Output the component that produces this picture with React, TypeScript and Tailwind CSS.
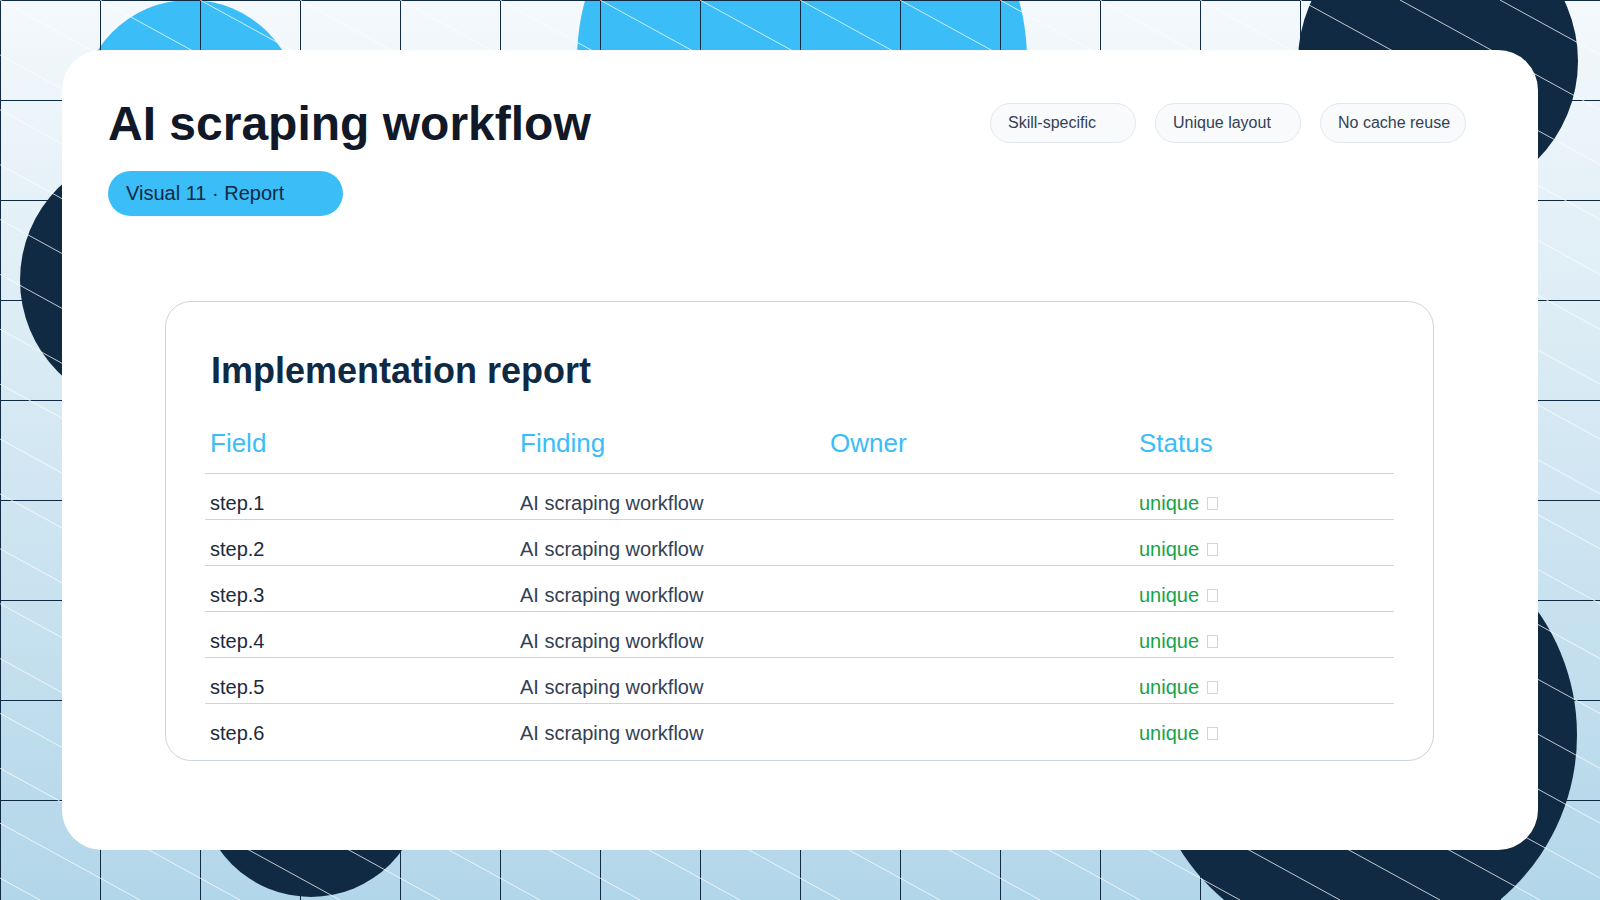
const pills = ["Skill-specific", "Unique layout", "No cache reuse"];
const rows = [1, 2, 3, 4, 5, 6];

function Backdrop() {
  const diag = Array.from({ length: 34 }, (_, i) => i * 100 - 1700);
  return (
    <div className="absolute inset-0">
      <div className="absolute left-[80px] top-[0px] h-[220px] w-[220px] rounded-full bg-[#3bbdf8]" />
      <div className="absolute left-[577px] top-[-165px] h-[450px] w-[450px] rounded-full bg-[#3bbdf8]" />
      <div className="absolute left-[20px] top-[150px] h-[260px] w-[260px] rounded-full bg-[#102a43]" />
      <div className="absolute left-[1298px] top-[-79px] h-[280px] w-[280px] rounded-full bg-[#102a43]" />
      <div className="absolute left-[1147px] top-[520px] h-[430px] w-[430px] rounded-full bg-[#102a43]" />
      <div className="absolute left-[199px] top-[673px] h-[224px] w-[224px] rounded-full bg-[#102a43]" />
      <svg className="absolute inset-0" width="1600" height="900">
        {Array.from({ length: 16 }, (_, i) => (
          <line key={"v" + i} x1={i * 100 + 0.5} y1={0} x2={i * 100 + 0.5} y2={900} stroke="#102a43" strokeWidth="1" />
        ))}
        {Array.from({ length: 9 }, (_, i) => (
          <line key={"h" + i} x1={0} y1={i * 100 + 0.5} x2={1600} y2={i * 100 + 0.5} stroke="#102a43" strokeWidth="1" />
        ))}
        {diag.map((x) => (
          <line key={"d" + x} x1={x} y1={0} x2={x + 1640} y2={900} stroke="#ffffff" strokeWidth="1" opacity="0.75" />
        ))}
      </svg>
    </div>
  );
}

export default function App() {
  return (
    <div
      className="relative h-[900px] w-[1600px] overflow-hidden bg-gradient-to-b from-[#f4f9fc] to-[#b2d6e9]"
      style={{ fontFamily: '"Liberation Sans", Arial, sans-serif' }}
    >
      <Backdrop />
      <div className="relative px-[62px] pt-[50px]">
        <div className="h-[800px] rounded-[40px] bg-white pl-[46px] pr-[72px] pt-[45px]">
          <div className="flex items-start justify-between">
            <div>
              <h1 className="text-[48px] font-bold leading-[1.2] text-[#111827]">AI scraping workflow</h1>
              <div className="mt-[18px] flex h-[45px] w-[235px] items-center rounded-full bg-[#3bbdf8] pl-[18px] text-[20px] text-[#0f2a44]">
                Visual 11 · Report
              </div>
            </div>
            <div className="mt-[8px] flex gap-[19px]">
              {pills.map((p) => (
                <div
                  key={p}
                  className="flex h-[40px] w-[146px] items-center rounded-full border border-[#e2e8f0] bg-[#f8fafc] pl-[17px] text-[16px] text-[#334155]"
                >
                  {p}
                </div>
              ))}
            </div>
          </div>

          <div className="ml-[57px] mt-[85px] w-[1269px] rounded-[26px] border border-[#cbd5e1] px-[39px] pb-[11px] pt-[47px]">
            <h2 className="pl-[6px] text-[36px] font-bold leading-[1.2] text-[#0f2a44]">Implementation report</h2>
            <div className="mt-[36px] grid w-[1189px] grid-cols-[310px_310px_309px_1fr] border-b border-[#cbd5e1] pb-[14px] text-[26px] leading-[31px] text-[#3bbdf8]">
              <div className="pl-[5px]">Field</div>
              <div className="pl-[5px]">Finding</div>
              <div className="pl-[5px]">Owner</div>
              <div className="pl-[5px]">Status</div>
            </div>
            {rows.map((n, i) => (
              <div
                key={n}
                className={`grid w-[1189px] grid-cols-[310px_310px_309px_1fr] pb-[4px] pt-[18px] text-[20px] leading-[23px] ${
                  i < rows.length - 1 ? "border-b border-[#cbd5e1]" : ""
                }`}
              >
                <div className="pl-[5px] text-[#1e293b]">step.{n}</div>
                <div className="pl-[5px] text-[#334155]">AI scraping workflow</div>
                <div className="pl-[5px]" />
                <div className="flex items-center pl-[5px] text-[#16a34a]">
                  unique
                  <span className="ml-[8px] inline-block h-[13px] w-[11px] border border-[#bbe5c8]" />
                </div>
              </div>
            ))}
          </div>
        </div>
      </div>
    </div>
  );
}
